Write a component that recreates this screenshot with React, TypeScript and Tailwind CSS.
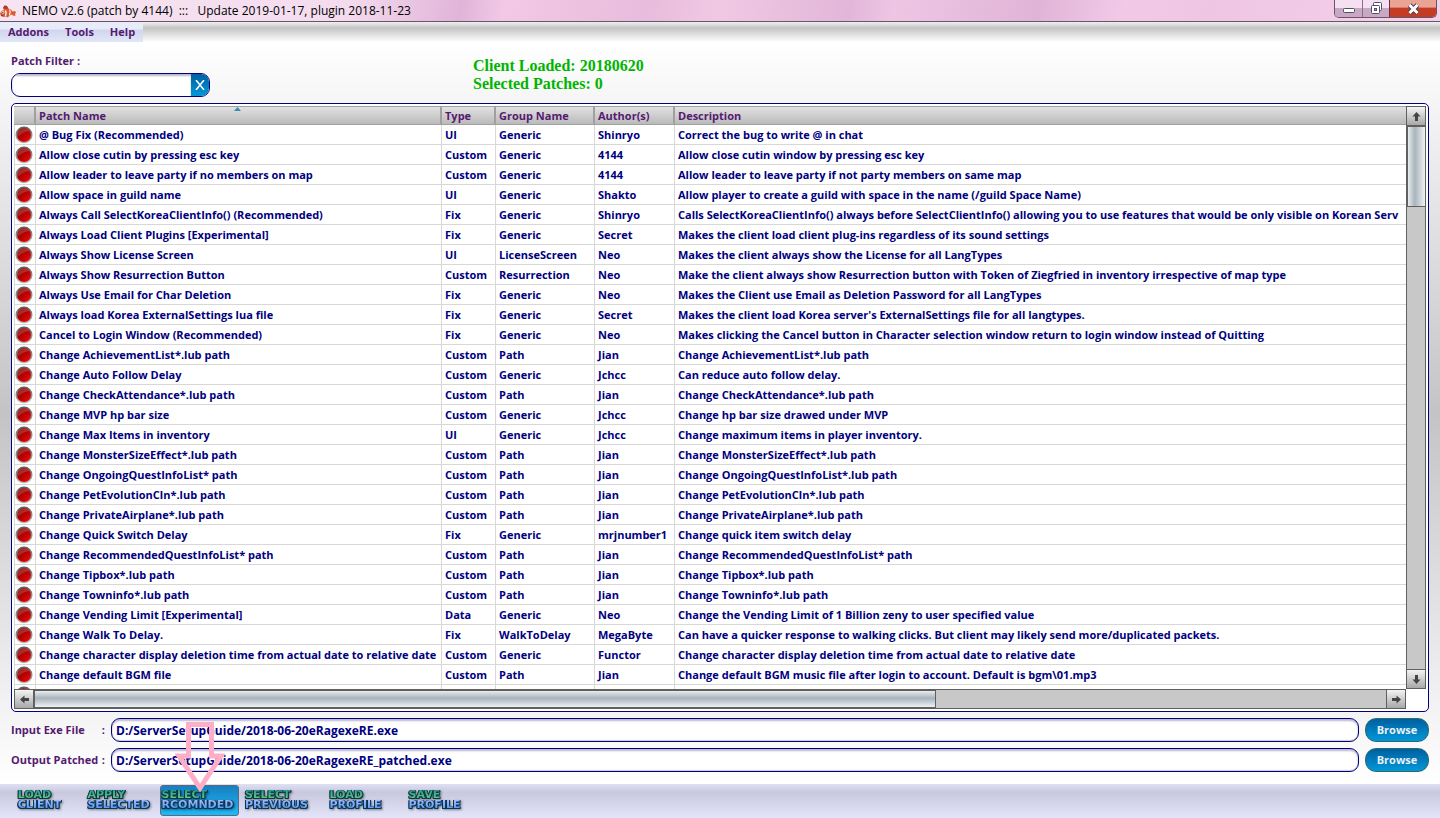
import React from "react";

type Patch = [name: string, type: string, group: string, author: string, description: string];

const patches: Patch[] = [
  ["@ Bug Fix (Recommended)", "UI", "Generic", "Shinryo", "Correct the bug to write @ in chat"],
  ["Allow close cutin by pressing esc key", "Custom", "Generic", "4144", "Allow close cutin window by pressing esc key"],
  ["Allow leader to leave party if no members on map", "Custom", "Generic", "4144", "Allow leader to leave party if not party members on same map"],
  ["Allow space in guild name", "UI", "Generic", "Shakto", "Allow player to create a guild with space in the name (/guild Space Name)"],
  ["Always Call SelectKoreaClientInfo() (Recommended)", "Fix", "Generic", "Shinryo", "Calls SelectKoreaClientInfo() always before SelectClientInfo() allowing you to use features that would be only visible on Korean Serv"],
  ["Always Load Client Plugins [Experimental]", "Fix", "Generic", "Secret", "Makes the client load client plug-ins regardless of its sound settings"],
  ["Always Show License Screen", "UI", "LicenseScreen", "Neo", "Makes the client always show the License for all LangTypes"],
  ["Always Show Resurrection Button", "Custom", "Resurrection", "Neo", "Make the client always show Resurrection button with Token of Ziegfried in inventory irrespective of map type"],
  ["Always Use Email for Char Deletion", "Fix", "Generic", "Neo", "Makes the Client use Email as Deletion Password for all LangTypes"],
  ["Always load Korea ExternalSettings lua file", "Fix", "Generic", "Secret", "Makes the client load Korea server's ExternalSettings file for all langtypes."],
  ["Cancel to Login Window (Recommended)", "Fix", "Generic", "Neo", "Makes clicking the Cancel button in Character selection window return to login window instead of Quitting"],
  ["Change AchievementList*.lub path", "Custom", "Path", "Jian", "Change AchievementList*.lub path"],
  ["Change Auto Follow Delay", "Custom", "Generic", "Jchcc", "Can reduce auto follow delay."],
  ["Change CheckAttendance*.lub path", "Custom", "Path", "Jian", "Change CheckAttendance*.lub path"],
  ["Change MVP hp bar size", "Custom", "Generic", "Jchcc", "Change hp bar size drawed under MVP"],
  ["Change Max Items in inventory", "UI", "Generic", "Jchcc", "Change maximum items in player inventory."],
  ["Change MonsterSizeEffect*.lub path", "Custom", "Path", "Jian", "Change MonsterSizeEffect*.lub path"],
  ["Change OngoingQuestInfoList* path", "Custom", "Path", "Jian", "Change OngoingQuestInfoList*.lub path"],
  ["Change PetEvolutionCln*.lub path", "Custom", "Path", "Jian", "Change PetEvolutionCln*.lub path"],
  ["Change PrivateAirplane*.lub path", "Custom", "Path", "Jian", "Change PrivateAirplane*.lub path"],
  ["Change Quick Switch Delay", "Fix", "Generic", "mrjnumber1", "Change quick item switch delay"],
  ["Change RecommendedQuestInfoList* path", "Custom", "Path", "Jian", "Change RecommendedQuestInfoList* path"],
  ["Change Tipbox*.lub path", "Custom", "Path", "Jian", "Change Tipbox*.lub path"],
  ["Change Towninfo*.lub path", "Custom", "Path", "Jian", "Change Towninfo*.lub path"],
  ["Change Vending Limit [Experimental]", "Data", "Generic", "Neo", "Change the Vending Limit of 1 Billion zeny to user specified value"],
  ["Change Walk To Delay.", "Fix", "WalkToDelay", "MegaByte", "Can have a quicker response to walking clicks. But client may likely send more/duplicated packets."],
  ["Change character display deletion time from actual date to relative date", "Custom", "Generic", "Functor", "Change character display deletion time from actual date to relative date"],
  ["Change default BGM file", "Custom", "Path", "Jian", "Change default BGM music file after login to account. Default is bgm\\01.mp3"],
  ["", "", "", "", ""],
];

const tools: { top: string; bottom: string; active?: boolean }[] = [
  { top: "LOAD", bottom: "CLIENT" },
  { top: "APPLY", bottom: "SELECTED" },
  { top: "SELECT", bottom: "RCOMNDED", active: true },
  { top: "SELECT", bottom: "PREVIOUS" },
  { top: "LOAD", bottom: "PROFILE" },
  { top: "SAVE", bottom: "PROFILE" },
];

function FishIcon() {
  return (
    <svg viewBox="0 0 16 16" className="h-4 w-4 shrink-0" aria-hidden="true">
      <path d="M3 5 4.5 2.5 7 3 8.5 5.5 11 6.5 12.5 8.5 15 8 16 9.5 15 11 15.5 13 13 12.5 11.5 11.5 9 13 8 14.5 6 13.5 3 14 1 13 0 10.5 1.5 8 4 7Z" fill="#dd5a30" />
      <path d="M3 5 4.5 2.5 7 3 8 5.5 5.5 6Z" fill="#a83c20" />
      <path d="M5.2 7.5C6.4 9 6.4 11 5.4 13M9.6 6.5C10.6 8.5 10.4 10.5 9.4 12.2" fill="none" stroke="#fbeee6" strokeWidth="1.3" />
      <circle cx="3" cy="9.6" r="1.3" fill="#fff" />
      <circle cx="2.9" cy="9.7" r=".7" fill="#222" />
      <path d="M1 12 3.5 12.3" stroke="#6c2010" strokeWidth=".7" />
    </svg>
  );
}

function Led() {
  return (
    <svg viewBox="0 0 18 18" className="block h-[18px] w-[18px]" role="img" aria-label="off">
      <defs>
        <linearGradient id="rim" x1="0" y1="0" x2="0" y2="1">
          <stop offset="0" stopColor="#5a5a5a" />
          <stop offset="1" stopColor="#c4c4c4" />
        </linearGradient>
        <linearGradient id="bulb" x1="0" y1="0" x2="1" y2="1">
          <stop offset="0.2" stopColor="#8a0000" />
          <stop offset="0.55" stopColor="#c00000" />
          <stop offset="1" stopColor="#f01010" />
        </linearGradient>
      </defs>
      <circle cx="9" cy="9" r="8.5" fill="url(#rim)" />
      <circle cx="9" cy="9" r="7" fill="url(#bulb)" />
      <path d="M2.4 11A7 7 0 0 1 14.8 5C11 5 7 7 2.4 11Z" fill="#fff" opacity=".16" />
    </svg>
  );
}

const arrowTurn = { up: "rotate-0", right: "rotate-90", down: "rotate-180", left: "-rotate-90" };

function ScrollArrow({ dir, className }: { dir: keyof typeof arrowTurn; className: string }) {
  return (
    <button
      aria-label={`Scroll ${dir}`}
      className={`flex shrink-0 items-center justify-center border border-[#606060] bg-linear-to-b from-[#f4f4f4] to-[#a8a8a8] ${className}`}
    >
      <svg viewBox="0 0 9 9" className={`h-[9px] w-[9px] ${arrowTurn[dir]}`} aria-hidden="true">
        <path d="M4.5 0 8.5 4.5H6V9H3V4.5H.5Z" fill="#444" />
      </svg>
    </button>
  );
}

function FileRow({ id, label, value }: { id: string; label: string; value: string }) {
  return (
    <div className="flex h-6 items-center">
      <label htmlFor={id} className="flex w-[100px] shrink-0 justify-between pr-[6px] whitespace-nowrap text-[#551a70]">
        <span>{label}</span>
        <span>:</span>
      </label>
      <input
        id={id}
        defaultValue={value}
        className="h-6 min-w-0 flex-1 rounded-[9px] border border-[#000080] bg-white px-1 text-[12px] text-[#000080] shadow-[inset_0_2px_2px_#b8b8cc,inset_0_-1px_1px_#ccc] outline-none"
      />
      <button className="ml-1.5 h-6 w-16 rounded-[11px] border border-[#2a6a70] bg-linear-to-b from-[#0060a0] to-[#0098d8] text-[#e8f0f8]">
        Browse
      </button>
    </div>
  );
}

const th = "p-0 pl-[3px] text-left font-bold";
const td = "overflow-hidden border-b border-[#d8d8d8] p-0 pl-[3px] whitespace-nowrap";

export default function App() {
  return (
    <div className="flex h-screen min-h-80 flex-col overflow-hidden bg-white font-['Open_Sans','Noto_Sans',sans-serif] text-[11px] leading-4 font-bold">
      <header className="flex h-[22px] shrink-0 items-start justify-between border-b border-[#6a5468] bg-[linear-gradient(100deg,#f6e4f2_0%,#f4dcee_24%,#e6bede_30%,#e0b4d8_32%,#f2c8e6_35%,#e8bcdc_45%,#f0c8e4_50%,#e2b6d8_59%,#eec6e4_62%,#e0b4d6_72%,#f2cae8_78%,#eec6e4_84%,#f4d0ea_100%)]">
        <div className="flex items-center gap-1.5 pt-[3px] text-[12px] font-normal text-black">
          <FishIcon />
          <h1 className="whitespace-pre">NEMO v2.6 (patch by 4144)  :::   Update 2019-01-17, plugin 2018-11-23</h1>
        </div>
        <div className="mr-[3px] flex h-[18px] overflow-hidden rounded-b-[5px] border border-t-0 border-[#6a5468]">
          <button aria-label="Minimize" className="flex w-7 items-center justify-center border-r border-[#8c7088] bg-linear-to-b from-[#f4e0f0] from-45% to-[#c8a8c4] to-50%">
            <svg viewBox="0 0 12 12" className="h-3 w-3" aria-hidden="true">
              <rect x=".5" y="5.5" width="11" height="4" rx="1" fill="#fff" stroke="#505068" />
            </svg>
          </button>
          <button aria-label="Restore" className="flex w-[27px] items-center justify-center border-r border-[#6a3040] bg-linear-to-b from-[#f4e0f0] from-45% to-[#c8a8c4] to-50%">
            <svg viewBox="0 0 13 13" className="h-[13px] w-[13px]" aria-hidden="true">
              <rect x="3.5" y=".5" width="8" height="8" rx="1" fill="#fff" stroke="#505068" />
              <rect x="1.5" y="3.5" width="8" height="8" rx="1" fill="#fff" stroke="#505068" />
              <rect x="4.5" y="6.5" width="2" height="2" fill="#c8a8c4" stroke="#505068" />
            </svg>
          </button>
          <button aria-label="Close" className="flex w-[46px] items-center justify-center bg-linear-to-b from-[#eaa494] from-40% to-[#c43c24] to-50%">
            <svg viewBox="0 0 13 12" className="h-3 w-[13px]" aria-hidden="true">
              <path d="M2.5 2 10.5 10M10.5 2 2.5 10" stroke="#504050" strokeWidth="5" />
              <path d="M2.5 2 10.5 10M10.5 2 2.5 10" stroke="#fff" strokeWidth="3" />
            </svg>
          </button>
        </div>
      </header>

      <nav className="flex h-5 shrink-0 bg-linear-to-b from-[#f0f0f0] via-[#c4c4c4] via-30% to-white">
        <div className="flex items-center gap-4 bg-linear-to-b from-[#e8ecf8] from-35% via-[#d0d6ee] via-40% to-[#e2e6f8] px-2 text-[#551a70]">
          <button>Addons</button>
          <button>Tools</button>
          <button>Help</button>
        </div>
      </nav>

      <main className="flex min-h-0 flex-1 flex-col bg-linear-to-b from-white via-[#c4c4c4] to-white px-[11px] pt-[11px] pb-3">
        <div className="flex shrink-0">
          <div className="w-[199px]">
            <label htmlFor="filter" className="block text-[#551a70]">Patch Filter :</label>
            <div className="mt-1 flex h-6 overflow-hidden rounded-[9px] border border-[#000080] bg-white">
              <input id="filter" className="min-w-0 flex-1 px-1 shadow-[inset_0_2px_2px_#b8b8cc] outline-none" />
              <button aria-label="Clear filter" className="flex w-[18px] items-center justify-center bg-linear-to-b from-[#0060a0] to-[#0098d8]">
                <svg viewBox="0 0 10 10" className="h-2.5 w-2.5" aria-hidden="true">
                  <path d="M1 0 9 10M9 0 1 10" stroke="#fff" strokeWidth="1.5" />
                </svg>
              </button>
            </div>
          </div>
          <div className="ml-[263px] pt-1 font-['Liberation_Serif',serif] text-[16px] leading-[18px] text-[#00b400]">
            <p>Client Loaded: 20180620</p>
            <p>Selected Patches: 0</p>
          </div>
        </div>

        <section className="mt-1.5 grid min-h-0 flex-1 grid-cols-[minmax(0,1fr)_20px] grid-rows-[minmax(0,1fr)_20px] rounded-[5px] border border-[#000080] bg-white p-0.5">
          <div className="overflow-hidden">
            <table className="w-full table-fixed border-separate border-spacing-0">
              <colgroup>
                <col className="w-[22px]" />
                <col className="w-[406px]" />
                <col className="w-[54px]" />
                <col className="w-[99px]" />
                <col className="w-20" />
                <col />
              </colgroup>
              <thead>
                <tr className="h-[19px] bg-linear-to-b from-[#e4e4e4] to-[#b8b8b8] text-[#551a70] [&>th]:border-y [&>th]:border-[#a0a0a0] [&>th:not(:last-child)]:border-r-2">
                  <th className={th} aria-label="State" />
                  <th className={`${th} relative`} aria-sort="ascending">
                    Patch Name
                    <svg viewBox="0 0 7 4" className="absolute top-0 left-1/2 -ml-1 h-1 w-[7px]" aria-hidden="true">
                      <path d="M3.5 0 7 4H0Z" fill="#3c8ab8" />
                    </svg>
                  </th>
                  <th className={th}>Type</th>
                  <th className={th}>Group Name</th>
                  <th className={th}>Author(s)</th>
                  <th className={th}>Description</th>
                </tr>
              </thead>
              <tbody className="text-[#000080]">
                {patches.map((patch, i) => (
                  <tr key={i} className="h-5">
                    <td className="border-r border-b border-l border-[#d8d8d8] p-0"><Led /></td>
                    {patch.slice(0, 4).map((cell, j) => (
                      <td key={j} className={`${td} border-r`}>{cell}</td>
                    ))}
                    <td className={td}>{patch[4]}</td>
                  </tr>
                ))}
              </tbody>
            </table>
          </div>
          <div className="flex flex-col bg-[#c8c8c8]">
            <ScrollArrow dir="up" className="h-5" />
            <div className="h-[81px] border border-l-2 border-[#606060] bg-linear-to-r from-[#e8ecee] via-[#a8b4bc] via-40% to-[#f0f2f4]" />
            <div className="flex-1 border-x border-[#606060]" />
            <ScrollArrow dir="down" className="h-5" />
          </div>
          <div className="flex bg-[#c8c8c8]">
            <ScrollArrow dir="left" className="w-5" />
            <div className="flex-2 border-y-2 border-r border-l border-[#606060] bg-linear-to-b from-[#e8ecee] via-[#a8b4bc] via-45% to-[#f0f2f4]" />
            <div className="flex-1 border-y border-[#606060]" />
            <ScrollArrow dir="right" className="w-5" />
          </div>
        </section>

        <div className="mt-1.5 flex shrink-0 flex-col gap-1.5">
          <FileRow id="input" label="Input Exe File" value="D:/ServerSetupGuide/2018-06-20eRagexeRE.exe" />
          <FileRow id="output" label="Output Patched" value="D:/ServerSetupGuide/2018-06-20eRagexeRE_patched.exe" />
        </div>
      </main>

      <footer className="flex h-[34px] shrink-0 items-start bg-linear-to-b from-[#e0e0f4] via-[#c8c8de] via-25% to-[#e4e4fa] pt-px pl-0.5">
        {tools.map((tool) => (
          <button
            key={tool.top + tool.bottom}
            className={`relative flex h-[31px] w-[79px] justify-center rounded-[3px] border pt-1 pr-1 ${
              tool.active ? "border-[#606878] bg-linear-to-b from-[#1880c0] to-[#20b8f8]" : "border-transparent"
            }`}
          >
            <span className="flex flex-col items-start font-['DejaVu_Sans',sans-serif] text-[11px] leading-[10px] [filter:drop-shadow(1px_0_0_#043850)_drop-shadow(-1px_0_0_#043850)_drop-shadow(0_1px_0_#043850)_drop-shadow(1px_1px_1px_#0006)]">
              <span className="bg-linear-to-b from-[#2c9c88] to-[#78d068] bg-clip-text text-transparent">{tool.top}</span>
              <span className="bg-linear-to-b from-[#a8b8ff] to-[#5094f0] bg-clip-text text-transparent">{tool.bottom}</span>
            </span>
            {tool.active && (
              <svg viewBox="0 0 50 72" className="pointer-events-none absolute -top-16 left-3.5 h-[72px] w-[50px]" aria-hidden="true">
                <path d="M13.5 34V2.5H36.5V34H46L25 66 4 34Z" fill="none" stroke="#ffaec9" strokeWidth="5" />
              </svg>
            )}
          </button>
        ))}
      </footer>
    </div>
  );
}
